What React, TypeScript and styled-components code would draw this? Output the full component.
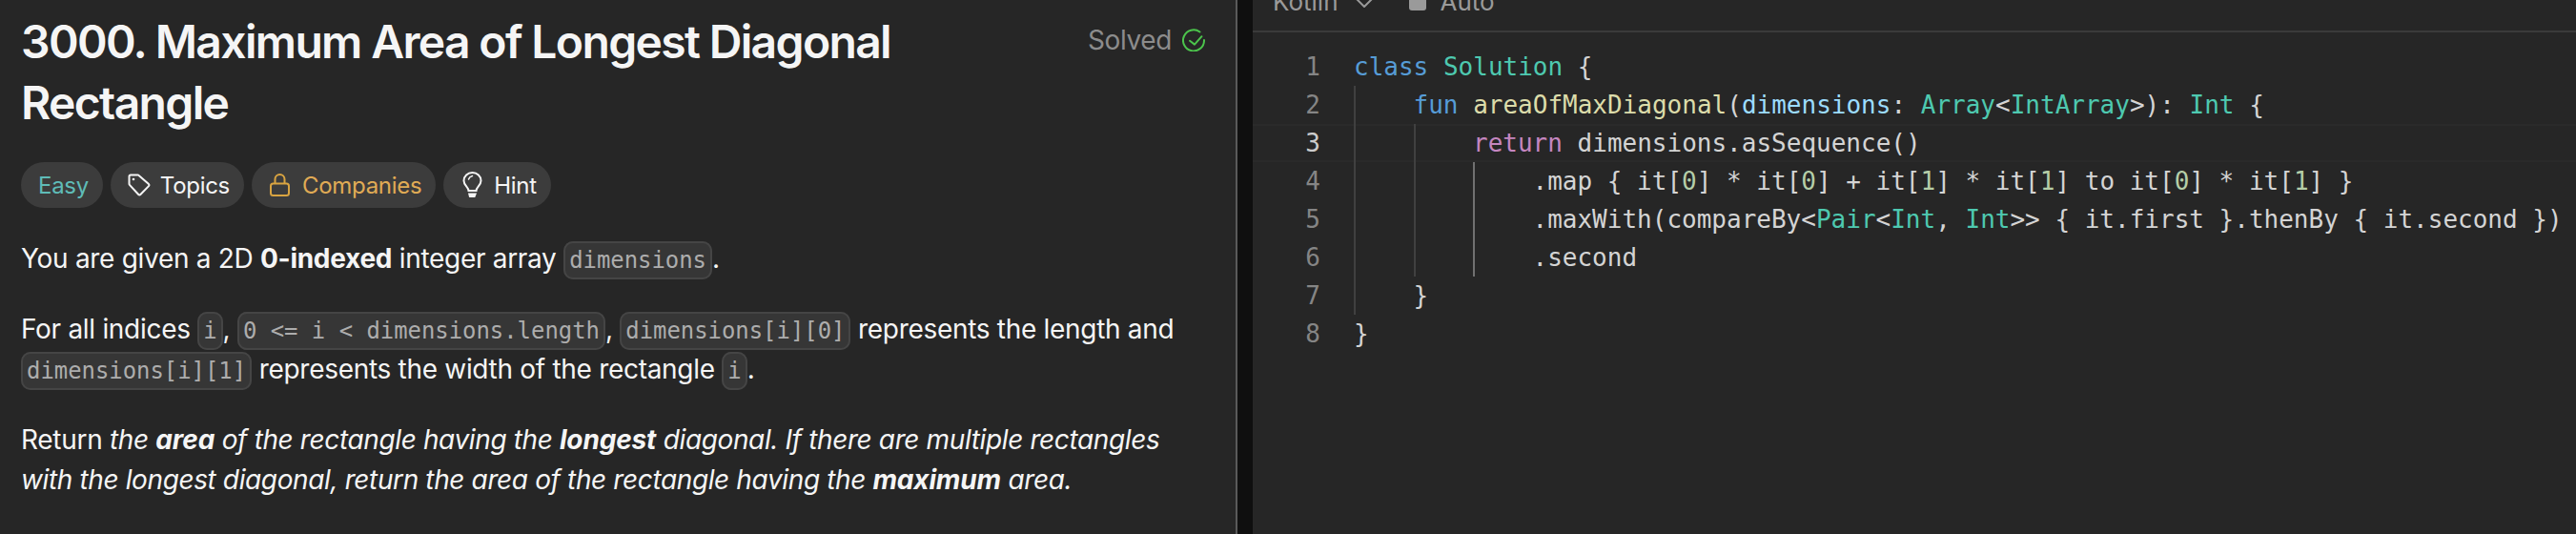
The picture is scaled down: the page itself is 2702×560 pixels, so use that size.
import { createGlobalStyle, styled } from 'styled-components'
import type { ReactNode } from 'react'

const GlobalStyle = createGlobalStyle`
  html, body {
    margin: 0;
    padding: 0;
    background: #262626;
  }
  body {
    font-family: Inter, "Noto Sans", sans-serif;
  }
`

const Page = styled.div`
  display: flex;
  width: 2702px;
  height: 560px;
  overflow: hidden;
  background: #0f0f0f;
`

const Description = styled.section`
  box-sizing: border-box;
  width: 1298px;
  flex: none;
  padding: 12px 32px 0 22px;
  background: #262626;
  border-right: 2px solid #5a5a5a;
  color: #f5f5f5;
`

const TitleRow = styled.header`
  display: flex;
  justify-content: space-between;
  align-items: flex-start;
`

const Title = styled.h1`
  width: 980px;
  margin: 0;
  font-size: 48px;
  line-height: 64px;
  font-weight: 600;
  letter-spacing: -1.65px;
  color: #f5f5f5;
`

const SolvedBadge = styled.div`
  display: flex;
  align-items: center;
  gap: 11px;
  margin-top: 12px;
  font-size: 28px;
  line-height: 36px;
  letter-spacing: -0.38px;
  color: #8c8c8c;
`

const Chips = styled.div`
  display: flex;
  gap: 8px;
  margin-top: 30px;
`

const Chip = styled.div<{ $color?: string }>`
  display: flex;
  align-items: center;
  gap: 10px;
  height: 48px;
  padding: 0 15px 0 18px;
  border-radius: 24px;
  background: #3c3c3c;
  font-size: 24px;
  letter-spacing: -0.3px;
  color: ${(p) => p.$color ?? '#f5f5f5'};
`

const Prose = styled.div`
  margin-top: 32px;
  font-size: 28px;
  line-height: 42px;
  letter-spacing: -0.3px;
  color: #f5f5f5;

  em {
    letter-spacing: -0.38px;
  }

  em strong {
    letter-spacing: -0.15px;
  }
`

const Para = styled.p`
  margin: 0 0 32px;
`

const InlineCode = styled.code`
  padding: 4px 4px;
  border: 2px solid #454545;
  border-radius: 10px;
  background: #363636;
  font-family: "DejaVu Sans Mono", monospace;
  font-size: 23.9px;
  line-height: 1;
  letter-spacing: 0;
  color: #adadad;
`

const Gutter = styled.div`
  width: 16px;
  flex: none;
  background: #0f0f0f;
`

const Editor = styled.section`
  flex: 1;
  min-width: 0;
  background: #262626;
`

const EditorBar = styled.div`
  box-sizing: border-box;
  display: flex;
  align-items: flex-end;
  height: 34px;
  padding: 0 0 15px 21px;
  overflow: hidden;
  border-bottom: 2px solid #3a3a3a;
  font-size: 26px;
  line-height: 30px;
  color: #9a9a9a;
`

const BarLabel = styled.span<{ $gap?: number }>`
  display: block;
  margin-left: ${(p) => p.$gap ?? 0}px;
`

const BarIcon = styled.svg<{ $gap: number; $lift: number }>`
  flex: none;
  margin-left: ${(p) => p.$gap}px;
  margin-bottom: ${(p) => p.$lift}px;
`

const CodeArea = styled.div`
  display: flex;
  padding-top: 16px;
  font-family: "DejaVu Sans Mono", monospace;
  font-size: 26px;
  line-height: 40px;
  white-space: pre;
`

const LineNumbers = styled.div`
  width: 71px;
  flex: none;
  margin-right: 35px;
  text-align: right;
  color: #858585;
`

const LineNo = styled.div<{ $active?: boolean }>`
  color: ${(p) => (p.$active ? '#cccccc' : '#858585')};
`

const CodeLines = styled.div`
  flex: 1;
  color: #d4d4d4;
`

const CodeLine = styled.div<{ $active?: boolean }>`
  display: flex;
  height: 40px;
  ${(p) => (p.$active ? 'box-shadow: inset 0 2px 0 #2a2a2a, inset 0 -2px 0 #2a2a2a; margin-left: -106px; padding-left: 106px;' : '')}
`

const Indent = styled.span<{ $bright?: boolean }>`
  display: block;
  box-sizing: border-box;
  width: 62.5px;
  height: 40px;
  flex: none;
  border-left: 2px solid ${(p) => (p.$bright ? '#707070' : '#404040')};
`

const tokenColors = {
  key: '#569cd6',
  type: '#4ec9b0',
  fn: '#dcdcaa',
  param: '#9cdcfe',
  flow: '#c586c0',
  num: '#b5cea8',
}

const Tok = styled.span<{ $kind: keyof typeof tokenColors }>`
  color: ${(p) => tokenColors[p.$kind]};
`

const TagIcon = () => (
  <svg width="24" height="24" viewBox="0 0 24 24" fill="none" stroke="currentColor" strokeWidth="2" strokeLinejoin="round">
    <path d="M1.500 3c0-.9.6-1.500 1.500-1.500h7.500c.4 0 .8.1 1.100.4l10.400 9.200c.6.6.6 1.400 0 2l-8.700 8.900c-.6.6-1.400.6-2 0L1.900 11.900c-.3-.3-.4-.7-.4-1.100z" />
    <circle cx="6" cy="6" r="1.300" fill="currentColor" stroke="none" />
  </svg>
)

const LockIcon = () => (
  <svg width="25" height="24" viewBox="0 0 25 24" fill="none" stroke="#d9a441" strokeWidth="2">
    <rect x="2" y="10.500" width="19" height="12.500" rx="2.500" />
    <path d="M6.500 10.500V6a5 5 0 0 1 10 0v4.500" />
  </svg>
)

const BulbIcon = () => (
  <svg width="25" height="28" viewBox="0 0 25 28" fill="none" stroke="currentColor" strokeWidth="2" strokeLinecap="round">
    <path d="M8.500 20c0-3.500-5-5.500-5-10.500C3.500 4.700 7.500 1 12.500 1s9 3.700 9 8.500c0 5-5 7-5 10.500z" />
    <path d="M8.500 8c.6-1.800 2-3 4-3.500" strokeWidth="1.500" />
    <path d="M8 22.500h9l-1.500 4a1 1 0 0 1-1 .5h-4.500a1 1 0 0 1-1-.5z" fill="currentColor" stroke="none" />
  </svg>
)

const SolvedIcon = () => (
  <svg width="24" height="24" viewBox="0 0 24 24" fill="none" stroke="#4cc44c" strokeWidth="2" strokeLinecap="round" strokeLinejoin="round">
    <path d="M18.500 3.500A11 11 0 1 0 23 12" />
    <path d="M8 12.800l5 3.800 7.500-8.400" />
  </svg>
)

const Kw = ({ children }: { children: ReactNode }) => <Tok $kind="key">{children}</Tok>
const Ty = ({ children }: { children: ReactNode }) => <Tok $kind="type">{children}</Tok>
const Nm = ({ children }: { children: ReactNode }) => <Tok $kind="num">{children}</Tok>

const codeRows: { guides: number; bright?: boolean; active?: boolean; body: ReactNode }[] = [
  { guides: 0, body: <><Kw>class</Kw> <Ty>Solution</Ty> {'{'}</> },
  {
    guides: 1,
    body: (
      <>
        <Kw>fun</Kw> <Tok $kind="fn">areaOfMaxDiagonal</Tok>(<Tok $kind="param">dimensions</Tok>: <Ty>Array</Ty>{'<'}<Ty>IntArray</Ty>{'>'}): <Ty>Int</Ty> {'{'}
      </>
    ),
  },
  { guides: 2, active: true, body: <><Tok $kind="flow">return</Tok> dimensions.asSequence()</> },
  {
    guides: 3,
    bright: true,
    body: (
      <>
        .map {'{'} it[<Nm>0</Nm>] * it[<Nm>0</Nm>] + it[<Nm>1</Nm>] * it[<Nm>1</Nm>] to it[<Nm>0</Nm>] * it[<Nm>1</Nm>] {'}'}
      </>
    ),
  },
  {
    guides: 3,
    bright: true,
    body: (
      <>
        .maxWith(compareBy{'<'}<Ty>Pair</Ty>{'<'}<Ty>Int</Ty>, <Ty>Int</Ty>{'>> { it.first }.thenBy { it.second })'}
      </>
    ),
  },
  { guides: 3, bright: true, body: <>.second</> },
  { guides: 1, body: <>{'}'}</> },
  { guides: 0, body: <>{'}'}</> },
]

const App = () => {
  return (
    <>
      <GlobalStyle />
      <Page>
        <Description>
          <TitleRow>
            <Title>3000. Maximum Area of Longest Diagonal Rectangle</Title>
            <SolvedBadge>
              Solved
              <SolvedIcon />
            </SolvedBadge>
          </TitleRow>
          <Chips>
            <Chip $color="#5fbcb8">Easy</Chip>
            <Chip>
              <TagIcon />
              Topics
            </Chip>
            <Chip $color="#e0ab55">
              <LockIcon />
              Companies
            </Chip>
            <Chip>
              <BulbIcon />
              Hint
            </Chip>
          </Chips>
          <Prose>
            <Para>
              You are given a 2D <strong>0-indexed</strong> integer array <InlineCode>dimensions</InlineCode>.
            </Para>
            <Para>
              For all indices <InlineCode>i</InlineCode>, <InlineCode>0 &lt;= i &lt; dimensions.length</InlineCode>,{' '}
              <InlineCode>dimensions[i][0]</InlineCode> represents the length and{' '}
              <InlineCode>dimensions[i][1]</InlineCode> represents the width of the rectangle <InlineCode>i</InlineCode>.
            </Para>
            <Para>
              Return{' '}
              <em>
                the <strong>area</strong> of the rectangle having the <strong>longest</strong> diagonal. If there are
                multiple rectangles with the longest diagonal, return the area of the rectangle having the{' '}
                <strong>maximum</strong> area.
              </em>
            </Para>
          </Prose>
        </Description>
        <Gutter />
        <Editor>
          <EditorBar>
            <BarLabel>Kotlin</BarLabel>
            <BarIcon $gap={18} $lift={9} width="18" height="10" viewBox="0 0 18 10" fill="none" stroke="#9a9a9a" strokeWidth="2">
              <path d="M1 1l8 8 8-8" />
            </BarIcon>
            <BarIcon $gap={38} $lift={6} width="18" height="16" viewBox="0 0 18 16" fill="#9a9a9a">
              <rect x="0" y="0" width="18" height="16" rx="3" />
            </BarIcon>
            <BarLabel $gap={15}>Auto</BarLabel>
          </EditorBar>
          <CodeArea>
            <LineNumbers>
              {codeRows.map((row, i) => (
                <LineNo key={i} $active={row.active}>
                  {i + 1}
                </LineNo>
              ))}
            </LineNumbers>
            <CodeLines>
              {codeRows.map((row, i) => (
                <CodeLine key={i} $active={row.active}>
                  {Array.from({ length: row.guides }, (_, g) => (
                    <Indent key={g} $bright={row.bright && g === 2} />
                  ))}
                  <span>{row.body}</span>
                </CodeLine>
              ))}
            </CodeLines>
          </CodeArea>
        </Editor>
      </Page>
    </>
  )
}

export default App
